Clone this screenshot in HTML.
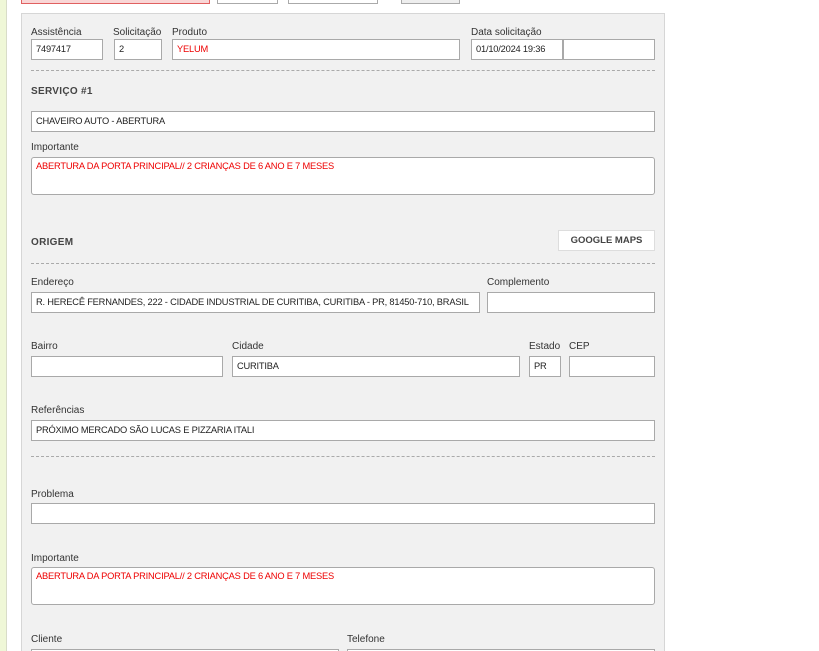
<!DOCTYPE html>
<html style="overflow:hidden;height:651px"><head><meta charset="utf-8"><style>
body{margin:0;width:819px;height:651px;overflow:hidden;background:#fff;font-family:"Liberation Sans",sans-serif;position:relative}
.a{position:absolute}
.strip{left:0;top:0;width:6px;height:651px;background:#eff7d7;border-right:1px solid #d8dcc8}
.panel{left:21px;top:13px;width:642px;height:650px;background:#f1f1f1;border:1px solid #d6d6d6}
.l{position:absolute;font-size:10px;color:#333}
.i{position:absolute;box-sizing:border-box;height:21px;background:#fff;border:1px solid #a9a9a9;font-size:9.3px;letter-spacing:-0.2px;color:#222;padding:0 4px;line-height:19px;white-space:nowrap;overflow:hidden}
.r{color:#e00}
.t{position:absolute;box-sizing:border-box;height:38px;background:#fff;border:1px solid #a9a9a9;border-radius:3px;font-size:9.3px;letter-spacing:-0.2px;color:#e00;padding:3px 4px}
.d{position:absolute;left:31px;width:624px;border-top:1px dashed #aaa}
.h{position:absolute;font-size:10px;font-weight:bold;color:#444;letter-spacing:0.3px}
</style></head><body>
<div class="a strip"></div>
<div class="a" style="left:21px;top:-2px;width:187px;height:4px;background:#f9d6d6;border:1px solid #e06060"></div>
<div class="a" style="left:217px;top:-2px;width:59px;height:4px;border:1px solid #aaa"></div>
<div class="a" style="left:288px;top:-2px;width:88px;height:4px;border:1px solid #aaa"></div>
<div class="a" style="left:401px;top:-2px;width:57px;height:4px;border:1px solid #aaa;background:#eee"></div>
<div class="a panel"></div>

<div class="l" style="left:31px;top:27px">Assistência</div>
<div class="l" style="left:113px;top:27px">Solicitação</div>
<div class="l" style="left:172px;top:27px">Produto</div>
<div class="l" style="left:471px;top:27px">Data solicitação</div>
<div class="i" style="left:31px;top:39px;width:72px">7497417</div>
<div class="i" style="left:114px;top:39px;width:48px">2</div>
<div class="i r" style="left:172px;top:39px;width:288px">YELUM</div>
<div class="i" style="left:471px;top:39px;width:92px">01/10/2024 19:36</div>
<div class="i" style="left:563px;top:39px;width:92px"></div>
<div class="d" style="top:70px"></div>

<div class="h" style="left:31px;top:86px">SERVIÇO #1</div>
<div class="i" style="left:31px;top:111px;width:624px">CHAVEIRO AUTO - ABERTURA</div>
<div class="l" style="left:31px;top:142px">Importante</div>
<div class="t" style="left:31px;top:157px;width:624px">ABERTURA DA PORTA PRINCIPAL// 2 CRIANÇAS DE 6 ANO E 7 MESES</div>

<div class="h" style="left:31px;top:237px">ORIGEM</div>
<div class="a" style="left:558px;top:230px;width:95px;height:19px;background:#fff;border:1px solid #ddd;font-size:9.5px;font-weight:bold;color:#444;text-align:center;line-height:19px">GOOGLE MAPS</div>
<div class="d" style="top:263px"></div>

<div class="l" style="left:31px;top:277px">Endereço</div>
<div class="l" style="left:487px;top:277px">Complemento</div>
<div class="i" style="left:31px;top:292px;width:449px">R. HERECÊ FERNANDES, 222 - CIDADE INDUSTRIAL DE CURITIBA, CURITIBA - PR, 81450-710, BRASIL</div>
<div class="i" style="left:487px;top:292px;width:168px"></div>

<div class="l" style="left:31px;top:341px">Bairro</div>
<div class="l" style="left:232px;top:341px">Cidade</div>
<div class="l" style="left:529px;top:341px">Estado</div>
<div class="l" style="left:569px;top:341px">CEP</div>
<div class="i" style="left:31px;top:356px;width:192px"></div>
<div class="i" style="left:232px;top:356px;width:288px">CURITIBA</div>
<div class="i" style="left:529px;top:356px;width:32px">PR</div>
<div class="i" style="left:569px;top:356px;width:86px"></div>

<div class="l" style="left:31px;top:405px">Referências</div>
<div class="i" style="left:31px;top:420px;width:624px">PRÓXIMO MERCADO SÃO LUCAS E PIZZARIA ITALI</div>
<div class="d" style="top:456px"></div>

<div class="l" style="left:31px;top:489px">Problema</div>
<div class="i" style="left:31px;top:503px;width:624px"></div>
<div class="l" style="left:31px;top:553px">Importante</div>
<div class="t" style="left:31px;top:567px;width:624px">ABERTURA DA PORTA PRINCIPAL// 2 CRIANÇAS DE 6 ANO E 7 MESES</div>

<div class="l" style="left:31px;top:634px">Cliente</div>
<div class="l" style="left:347px;top:634px">Telefone</div>
<div class="i" style="left:31px;top:649px;width:308px"></div>
<div class="i" style="left:347px;top:649px;width:308px"></div>
</body></html>
